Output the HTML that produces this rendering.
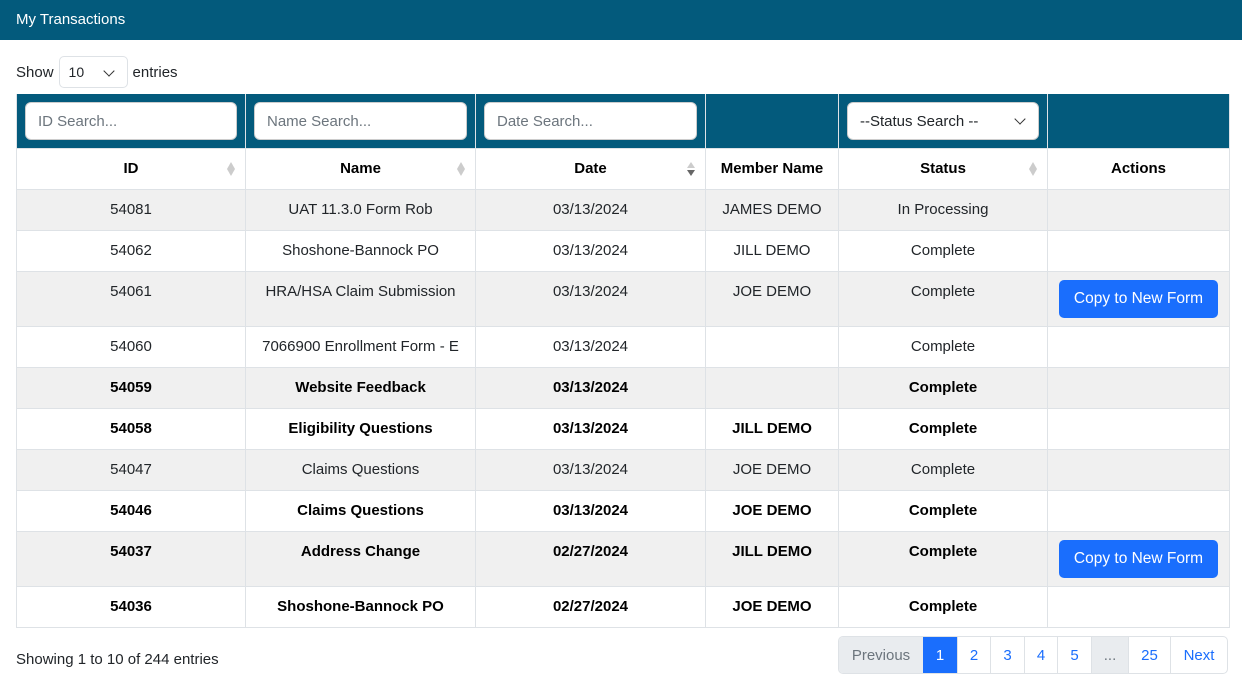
<!DOCTYPE html>
<html><head><style>
*{box-sizing:border-box;margin:0;padding:0}
body{width:1242px;height:686px;background:#fff;font-family:"Liberation Sans",sans-serif;font-size:15px;color:#212529;position:relative;overflow:hidden}
.top{position:absolute;left:0;top:0;width:1242px;height:40px;background:#035a7c;color:#fff;padding:11px 16px;font-size:15px}
.show{position:absolute;left:16px;top:56px;height:32px;display:flex;align-items:center;gap:5px}
.sel{width:69px;height:32px;border:1px solid #dee2e6;border-radius:5px;padding:7px 9px;font-size:14px;position:relative}
.chev{position:absolute;right:14px;top:10px;width:8px;height:8px;border-right:1.5px solid #333;border-bottom:1.5px solid #333;transform:rotate(45deg)}
table{position:absolute;left:16px;top:94px;border-collapse:collapse;width:1213px;table-layout:fixed}
td,th{border:1px solid #dee2e6;text-align:center;vertical-align:top;padding:0 4px}
tr.f td{background:#035a7c;height:54px;padding:8px 8px;border-color:#dee2e6;border-top:none}
.inp{height:38px;background:#fff;border-radius:6px;border:1px solid #ccc;color:#6c757d;text-align:left;padding:10px 12px;font-size:15px;position:relative}
th{height:41px;font-weight:bold;padding-top:11px;position:relative;color:#000}
.s{position:absolute;right:10px;top:13px;width:8px;height:14px;color:#ccc}
td{height:41px;padding-top:11px}
tr.g td{background:#f0f0f0}
tr.b td{font-weight:bold;color:#000}
tr.t td{height:55px}
.btn{display:inline-block;background:#1a6efd;color:#fff;border-radius:5px;width:159px;height:38px;padding-top:10px;margin-top:-3px;font-size:15.5px;font-weight:normal}
.info{position:absolute;left:16px;top:651px}
.pg{position:absolute;left:838px;top:636px;height:38px;display:flex;border:1px solid #dee2e6;border-radius:5px;overflow:hidden}
.pg div{height:36px;border-left:1px solid #dee2e6;color:#1a6efd;text-align:center;padding-top:10px}
</style></head><body>
<div class="top">My Transactions</div>
<div class="show">Show <div class="sel">10<span class="chev"></span></div> entries</div>
<table>
<colgroup><col style="width:229px"><col style="width:230px"><col style="width:230px"><col style="width:133px"><col style="width:209px"><col style="width:182px"></colgroup>
<tr class="f"><td><div class="inp">ID Search...</div></td><td><div class="inp">Name Search...</div></td><td><div class="inp">Date Search...</div></td><td></td><td><div class="inp" style="color:#212529;width:192px">--Status Search --<span class="chev" style="top:12px"></span></div></td><td></td></tr>
<tr><th>ID<svg class="s" viewBox="0 0 8 14"><path d="M4 0L8 7L4 14L0 7Z" fill="#ccc"/></svg></th><th>Name<svg class="s" viewBox="0 0 8 14"><path d="M4 0L8 7L4 14L0 7Z" fill="#ccc"/></svg></th><th>Date<svg class="s" viewBox="0 0 8 14"><path d="M4 0L8 6H0Z" fill="#ccc"/><path d="M0 8H8L4 14Z" fill="#666"/></svg></th><th>Member Name</th><th>Status<svg class="s" viewBox="0 0 8 14"><path d="M4 0L8 7L4 14L0 7Z" fill="#ccc"/></svg></th><th>Actions</th></tr>
<tr class="g"><td>54081</td><td>UAT 11.3.0 Form Rob</td><td>03/13/2024</td><td>JAMES DEMO</td><td>In Processing</td><td></td></tr>
<tr><td>54062</td><td>Shoshone-Bannock PO</td><td>03/13/2024</td><td>JILL DEMO</td><td>Complete</td><td></td></tr>
<tr class="g t"><td>54061</td><td>HRA/HSA Claim Submission</td><td>03/13/2024</td><td>JOE DEMO</td><td>Complete</td><td><span class="btn">Copy to New Form</span></td></tr>
<tr><td>54060</td><td>7066900 Enrollment Form - E</td><td>03/13/2024</td><td></td><td>Complete</td><td></td></tr>
<tr class="g b"><td>54059</td><td>Website Feedback</td><td>03/13/2024</td><td></td><td>Complete</td><td></td></tr>
<tr class="b"><td>54058</td><td>Eligibility Questions</td><td>03/13/2024</td><td>JILL DEMO</td><td>Complete</td><td></td></tr>
<tr class="g"><td>54047</td><td>Claims Questions</td><td>03/13/2024</td><td>JOE DEMO</td><td>Complete</td><td></td></tr>
<tr class="b"><td>54046</td><td>Claims Questions</td><td>03/13/2024</td><td>JOE DEMO</td><td>Complete</td><td></td></tr>
<tr class="g b t"><td>54037</td><td>Address Change</td><td>02/27/2024</td><td>JILL DEMO</td><td>Complete</td><td><span class="btn">Copy to New Form</span></td></tr>
<tr class="b"><td>54036</td><td>Shoshone-Bannock PO</td><td>02/27/2024</td><td>JOE DEMO</td><td>Complete</td><td></td></tr>
</table>
<div class="info">Showing 1 to 10 of 244 entries</div>
<div class="pg">
<div style="width:84px;background:#e9ecef;color:#6c757d;border-left:none">Previous</div>
<div style="width:34px;background:#1a6efd;color:#fff;border-left:none">1</div>
<div style="width:33px">2</div><div style="width:34px">3</div><div style="width:33px">4</div><div style="width:34px">5</div>
<div style="width:37px;background:#e9ecef;color:#6c757d">...</div>
<div style="width:42px">25</div><div style="width:57px">Next</div>
</div>
</body></html>
